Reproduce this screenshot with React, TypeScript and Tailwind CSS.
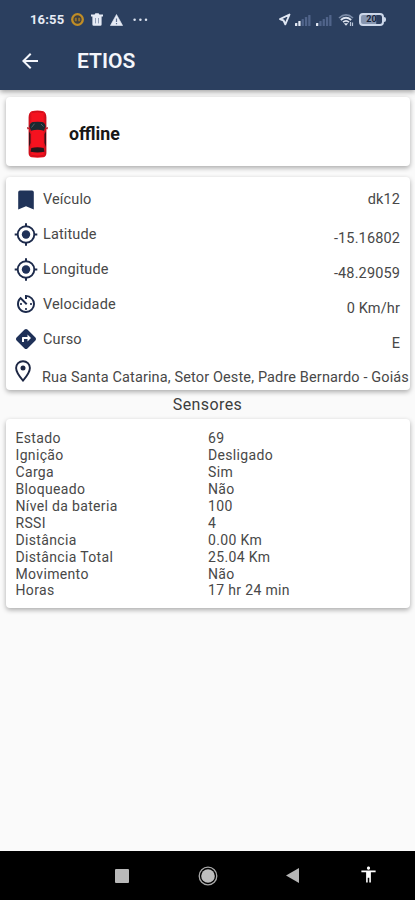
import React from "react";
import {
  MdAccessibility,
  MdArrowBack,
  MdAvTimer,
  MdDirections,
} from "react-icons/md";

const card =
  "mx-[6px] mr-[5px] rounded-[4px] bg-white shadow-[0_2px_5px_rgba(0,0,0,0.32)]";

function Signal({ level }: { level: number }) {
  const bars = [3, 5, 7, 9, 11];
  return (
    <svg width="16" height="12" viewBox="0 0 16 12">
      {bars.map((h, i) => (
        <rect
          key={h}
          x={i * 3.3}
          y={12 - h}
          width="2.3"
          height={h}
          rx="0.5"
          fill={i < level ? "#e3e9f4" : "#50648a"}
        />
      ))}
    </svg>
  );
}

function StatusBar() {
  return (
    <div className="flex h-[39px] items-center pl-[30px] text-[#e6ebf5]">
      <span className="w-[41px] text-[13px] font-bold tracking-[0.15px]">16:55</span>
      <svg width="13" height="13" viewBox="0 0 13 13">
        <circle cx="6.5" cy="6.5" r="5.3" fill="#3d3f42" stroke="#c08d26" strokeWidth="2.3" />
        <path d="M3.8 4.8h2v3.4h-2zM7.2 4.8h2v3.4h-2z" fill="#94722c" />
      </svg>
      <svg className="ml-[7px]" width="12" height="13" viewBox="0 0 12 13">
        <path d="M0 1.6h3.6L4.4.3h3.2l.8 1.3H12v1.8H0z" fill="#e6ebf5" />
        <path d="M1.4 3h9.2v8.4q0 1.3-1.3 1.3H2.7q-1.3 0-1.3-1.3z" fill="#e6ebf5" />
        <path d="M4.5 5v5.4M7.5 5v5.4" stroke="#8493ad" strokeWidth="0.9" />
      </svg>
      <svg className="ml-[7px]" width="13" height="12" viewBox="0 0 13 12">
        <path d="M6.5.5 12.6 11.5H.4z" fill="#e6ebf5" stroke="#e6ebf5" strokeWidth="0.6" strokeLinejoin="round" />
        <path d="M6.5 4.5v3.6M6.5 9v1.2" stroke="#5f7090" strokeWidth="1.2" />
      </svg>
      <svg className="ml-[10px]" width="15" height="4" viewBox="0 0 15 4">
        <circle cx="1.6" cy="1.7" r="1.25" fill="#dbe2ef" />
        <circle cx="7.4" cy="1.7" r="1.25" fill="#dbe2ef" />
        <circle cx="13" cy="1.7" r="1.25" fill="#dbe2ef" />
      </svg>
      <svg className="ml-[130px]" width="13" height="13" viewBox="0 0 13 13">
        <path d="M11.5 1.5 2 6.2l3.6 1.3 1.7 3.8z" fill="none" stroke="#dfe6f2" strokeWidth="1.9" strokeLinejoin="round" />
      </svg>
      <span className="ml-[4px]"><Signal level={2} /></span>
      <span className="ml-[5px]"><Signal level={1} /></span>
      <svg className="ml-[6px]" width="17" height="14" viewBox="0 0 17 14">
        <path d="M1 5q7-6.2 14 0" fill="none" stroke="#7a8ba7" strokeWidth="1.6" />
        <path d="M2.8 7q5.2-4.5 10.4 0M5 9.2q3-2.6 6 0" fill="none" stroke="#dfe6f2" strokeWidth="1.7" />
        <path d="M5.8 10.2h4.4L8 12.8z" fill="#dfe6f2" />
        <path d="M12.5 9v4M14.5 9.5v3.5" stroke="#b9c5d8" strokeWidth="1.2" />
      </svg>
      <div className="ml-[4px] flex h-[13px] w-[25px] items-center justify-center rounded-[4px] border-2 border-[#ccd7e9] bg-gradient-to-r from-[#8796b0] from-70% to-[#2c3e5e] to-75%">
        <span className="text-[9px] leading-[9px] font-bold text-[#17243a]">20</span>
      </div>
      <span className="h-[5px] w-[2px] rounded-r-sm bg-[#ccd7e9]" />
    </div>
  );
}

function Car() {
  return (
    <svg width="21" height="48" viewBox="0 0 21 48">
      <defs>
        <linearGradient id="paint" x1="0" x2="1">
          <stop offset="0" stopColor="#c40d1a" />
          <stop offset="0.2" stopColor="#f5121f" />
          <stop offset="0.8" stopColor="#f5121f" />
          <stop offset="1" stopColor="#bd0c19" />
        </linearGradient>
      </defs>
      <path d="M1.6 17.8.3 18.5M19.4 17.8l1.3.7" stroke="#ad1520" strokeWidth="2" />
      <path d="M4.5 1.3Q10.5-.2 16.5 1.3q2.8 1.5 2.9 6V43q0 3.5-2.9 4.2-6 .9-12 0Q1.6 46.5 1.6 43V7.3q.1-4.5 2.9-6z" fill="url(#paint)" />
      <path d="M5 2.2q5.5-1 11 0M4.5 45.8q6 .9 12 0" fill="none" stroke="#a90f19" strokeWidth="0.8" />
      <path d="M2.4 16.5q.5-3.8 3.5-4.4 4.6-.9 9.2 0 3 .6 3.5 4.4l-1.7 4.3q-6.4-2-12.8 0z" fill="#1b2930" />
      <path d="m4.5 17.5 3-3.8M14 14l2.5 2.5" stroke="#56666e" strokeWidth="0.9" />
      <path d="M2.1 21.5 3.5 24v9l-1.4 4zM18.9 21.5 17.5 24v9l1.4 4z" fill="#26131a" />
      <path d="M4.3 38q6.2-1.5 12.4 0l.7 3.7q-6.9 1.5-13.8 0z" fill="#25171c" />
    </svg>
  );
}

function BookmarkIcon() {
  return (
    <svg width="24" height="24" viewBox="0 0 24 24">
      <path d="M6 2.5h12q1.8 0 1.8 1.8v17.2L12 18.2l-7.8 3.3V4.3Q4.2 2.5 6 2.5z" fill="#203358" />
    </svg>
  );
}

function TargetIcon() {
  return (
    <svg width="24" height="24" viewBox="0 0 24 24">
      <circle cx="12" cy="11.5" r="8.3" fill="none" stroke="#1c2a4b" strokeWidth="1.9" />
      <circle cx="12" cy="11.5" r="4.2" fill="#1f3158" />
      <path d="M12 .2v3M12 19.8v3M.7 11.5h3M20.3 11.5h3" stroke="#1c2a4b" strokeWidth="2" />
    </svg>
  );
}

function TimerIcon() {
  return <MdAvTimer className="mb-[2px] h-[24px] w-[24px] text-[#1c2a4b]" />;
}

function DirectionIcon() {
  return <MdDirections className="mb-[2px] h-[24px] w-[24px] text-[#1f3158]" />;
}

const details = [
  { label: "Veículo", value: "dk12", icon: BookmarkIcon, drop: "pt-0" },
  { label: "Latitude", value: "-15.16802", icon: TargetIcon, drop: "pt-[8px]" },
  { label: "Longitude", value: "-48.29059", icon: TargetIcon, drop: "pt-[8px]" },
  { label: "Velocidade", value: "0 Km/hr", icon: TimerIcon, drop: "pt-[8px]" },
  { label: "Curso", value: "E", icon: DirectionIcon, drop: "pt-[8px]" },
];

const sensors = [
  ["Estado", "69"],
  ["Ignição", "Desligado"],
  ["Carga", "Sim"],
  ["Bloqueado", "Não"],
  ["Nível da bateria", "100"],
  ["RSSI", "4"],
  ["Distância", "0.00 Km"],
  ["Distância Total", "25.04 Km"],
  ["Movimento", "Não"],
  ["Horas", "17 hr 24 min"],
];

export default function App() {
  return (
    <div className="flex h-[900px] w-[415px] flex-col overflow-hidden bg-[#fafafa] font-['Roboto','Liberation_Sans',sans-serif] text-[#484848]">
      <header className="h-[90px] shrink-0 bg-[#2b3f5f] shadow-[0_2px_5px_rgba(0,0,0,0.35)]">
        <StatusBar />
        <div className="flex h-[43px] items-center text-[#f4f6fb]">
          <MdArrowBack className="ml-[18px] h-[24px] w-[24px]" />
          <h1 className="mt-[2px] ml-[35px] text-[21px] font-semibold">ETIOS</h1>
        </div>
      </header>

      <section className={`${card} mt-[7px] flex h-[69px] shrink-0 items-center pt-[5px] pl-[21px]`}>
        <Car />
        <span className="mt-[1px] ml-[21px] text-[17.8px] font-bold text-[#171717]">offline</span>
      </section>

      <section className={`${card} mt-[11px] h-[213px] shrink-0 pt-[5px]`}>
        {details.map(({ label, value, icon: Icon, drop }) => (
          <div key={label} className="flex h-[35px] items-center pr-[10px] pl-[8px] text-[14.5px] tracking-[0.13px]">
            <Icon />
            <span className="ml-[5px]">{label}</span>
            <span className={`ml-auto ${drop}`}>{value}</span>
          </div>
        ))}
        <div className="flex h-[28px] items-start pl-[5px]">
          <svg className="mt-[2px]" width="24" height="24" viewBox="0 0 24 24">
            <path d="M12 2.2c-3.9 0-6.9 3-6.9 6.900 0 4.700 6.900 12.500 6.900 12.500s6.900-7.800 6.900-12.500c0-3.900-3-6.900-6.900-6.900z" fill="none" stroke="#1c2643" strokeWidth="1.9" />
            <circle cx="12" cy="9.1" r="2.5" fill="#1c2643" />
          </svg>
          <span className="mt-[11px] ml-[7px] text-[14.5px] leading-[20px] tracking-[0.13px] whitespace-nowrap">
            Rua Santa Catarina, Setor Oeste, Padre Bernardo - Goiás
          </span>
        </div>
      </section>

      <h2 className="flex h-[29px] shrink-0 items-center justify-center text-[16px] tracking-[0.4px] text-[#3d3d3d]">Sensores</h2>

      <section className={`${card} h-[189px] shrink-0 pt-[11px] pl-[9.5px]`}>
        {sensors.map(([label, value]) => (
          <div key={label} className="grid h-[16.95px] grid-cols-[192.5px_1fr] items-center text-[14px] leading-[17px] tracking-[0.34px]">
            <span>{label}</span>
            <span>{value}</span>
          </div>
        ))}
      </section>

      <nav className="mt-auto flex h-[49px] shrink-0 items-center bg-black">
        <span className="ml-[115px] h-[14px] w-[14px] rounded-[1px] bg-[#b9b9b9]" />
        <svg className="ml-[69px]" width="20" height="20" viewBox="0 0 20 20">
          <circle cx="10" cy="10" r="8.8" fill="none" stroke="#a9a9a9" strokeWidth="1.3" />
          <circle cx="10" cy="10" r="6.8" fill="#bebebe" />
        </svg>
        <svg className="ml-[68px]" width="13" height="15" viewBox="0 0 13 15">
          <path d="M13 0v15L0 7.5z" fill="#b5b5b5" />
        </svg>
        <MdAccessibility className="mb-[2px] ml-[60px] h-[19px] w-[19px] text-white" />
      </nav>
    </div>
  );
}
